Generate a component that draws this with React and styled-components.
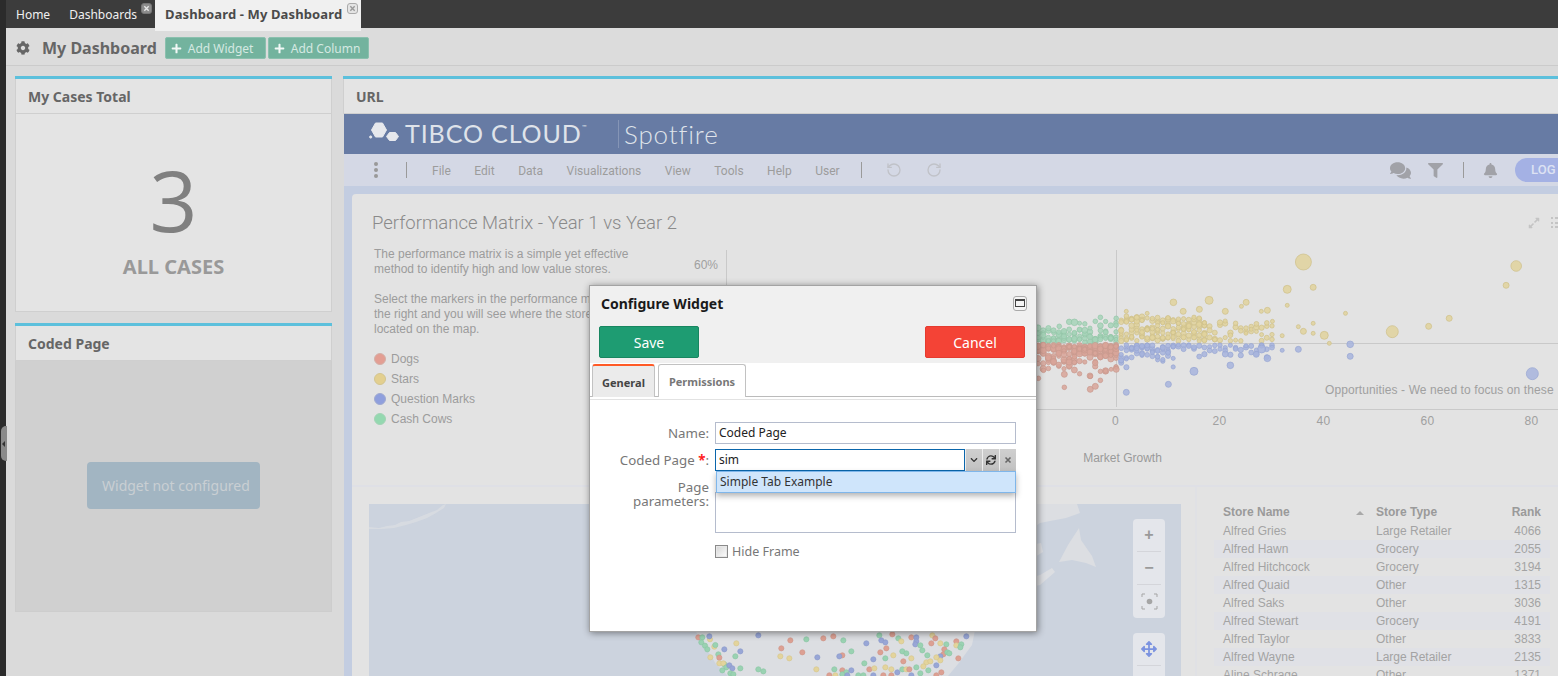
import React from "react";
import styled, { createGlobalStyle } from "styled-components";
import {
  FaCog, FaPlus, FaSync, FaChevronDown, FaArrowsAlt, FaExpandAlt, FaComments, FaFilter, FaBell,
} from "react-icons/fa";
import { RotateCcw, RotateCw } from "lucide-react";

const UI = `"Noto Sans", "DejaVu Sans", sans-serif`;
const ARIAL = `"Liberation Sans", Arial, sans-serif`;
const ROBOTO = `Roboto, "Liberation Sans", sans-serif`;

const Global = createGlobalStyle`
  html, body { margin: 0; padding: 0; background: #2b2b2b; overflow: hidden; }
  * { box-sizing: border-box; }
`;

const Page = styled.div`
  position: relative; width: 1558px; height: 676px; overflow: hidden; display: flex;
  font-family: ${UI}; background: #dadada;
`;
const Rail = styled.div`width: 6px; flex: none; background: #2b2b2b;`;
const Handle = styled.div`
  position: absolute; left: 1px; top: 426px; width: 6px; height: 35px; background: #8a8a8a;
  border-radius: 5px 0 0 5px; display: flex; align-items: center;
  &::before { content: ""; border: 3px solid transparent; border-right-color: #333; border-left: 0; margin-left: 1px; }
`;
const Main = styled.div`flex: 1; min-width: 0; display: flex; flex-direction: column;`;

const TabBar = styled.div`
  height: 28px; flex: none; display: flex; background: #3c3c3c; position: relative; z-index: 2;
`;
const Tab = styled.div`
  position: relative; height: ${p => (p.$active ? 31 : 28)}px; flex: none;
  padding: 0 ${p => p.$right}px 0 ${p => p.$left}px;
  font-size: ${p => (p.$active ? 13 : 12)}px; line-height: 29px; white-space: nowrap;
  letter-spacing: ${p => (p.$active ? ".12px" : "0")};
  background: ${p => (p.$active ? "#f0f0f0" : "transparent")};
  color: ${p => (p.$active ? "#4a4a4a" : "#f0f0f0")};
  font-weight: ${p => (p.$active ? 700 : 400)};
`;
const TabClose = styled.span`
  position: absolute; right: ${p => p.$right}px; top: ${p => p.$top}px;
  width: 11px; height: 11px; border-radius: 3px; display: flex;
  background: ${p => (p.$light ? "#e4e4e4" : "#8c8c8c")};
  border: 1px solid ${p => (p.$light ? "#aaa" : "#777")};
  align-items: center; justify-content: center;
  svg { display: block; }
`;

const Toolbar = styled.div`
  height: 38px; flex: none; display: flex; align-items: center; padding: 3px 0 0 10px;
  background: #dcdcdc; border-bottom: 1px solid #cbcbcb; color: #666;
`;
const ToolTitle = styled.div`
  font-size: 16px; font-weight: 700; color: #666; margin: 0 8px 0 12px; white-space: nowrap;
`;
const ToolButton = styled.div`
  height: 22px; width: 101px; margin-right: 2px; display: flex; align-items: center; padding-left: 5px; gap: 6px;
  background: #73b39e; border: 1px solid #8bc0ae; border-radius: 2px; color: #d5e9e2;
  font-size: 12px; white-space: nowrap;
  svg { color: #f2f8f6; flex: none; }
`;

const Columns = styled.div`flex: 1; min-height: 0; display: flex; gap: 11px; padding: 10px 0 0 9px;`;
const LeftCol = styled.div`width: 317px; flex: none; display: flex; flex-direction: column; gap: 11px;`;
const RightCol = styled.div`flex: 1; min-width: 0; display: flex; flex-direction: column;`;

const Widget = styled.section`
  display: flex; flex-direction: column; border-top: 3px solid #5cc0dc; height: ${p => p.$h ? p.$h + "px" : "auto"};
  flex: ${p => p.$grow ? "1" : "none"}; min-height: 0;
`;
const WidgetHead = styled.header`
  height: 35px; flex: none; padding: 0 12px; display: flex; align-items: center;
  background: #e4e4e4; border: 1px solid #cfcfcf; border-top: 0; border-right-width: ${p => (p.$open ? 0 : 1)}px;
  font-size: 14px; font-weight: 700; color: #666;
`;
const TotalBody = styled.div`
  flex: 1; background: #e4e4e4; border: 1px solid #cfcfcf; border-top: 0;
  display: flex; flex-direction: column; align-items: center; color: #8a8a8a;
`;
const BigNum = styled.div`font-family: "Open Sans", sans-serif; font-size: 84px; line-height: 96px; margin-top: 38px; font-weight: 400; color: #808080;`;
const BigLabel = styled.div`font-size: 20px; font-weight: 700; color: #999; margin-top: 5px; line-height: 28px;`;
const CodedBody = styled.div`
  flex: 1; background: #d0d0d0; border: 1px solid #cdcdcd; border-top: 0; padding-bottom: 2px;
  display: flex; align-items: center; justify-content: center;
`;
const NotConfigured = styled.div`
  width: 173px; height: 47px; border-radius: 4px; background: #a2b5c2; color: #c9cfd3;
  font-size: 14px; display: flex; align-items: center; padding-left: 15px; white-space: nowrap;
`;

const Frame = styled.div`
  flex: 1; min-height: 0; overflow: hidden; background: #c3cde1; display: flex; flex-direction: column;
  margin-left: 1px;
`;
const Banner = styled.div`
  height: 40px; flex: none; background: #677ba4; display: flex; align-items: center; padding-left: 25px; color: #dfe3ea;
`;
const Brand = styled.div`
  font-family: Lato, sans-serif; font-size: 25px; letter-spacing: .9px; font-weight: 400; white-space: nowrap; margin: -3px 0 0 5px; width: 213px;
  sup { font-size: 6px; vertical-align: 14px; letter-spacing: 0; }
`;
const BrandSep = styled.div`width: 1px; height: 28px; background: #8595b6; flex: none;`;
const Spot = styled.div`font-family: Lato, sans-serif; font-size: 26px; font-weight: 300; margin-left: 5px; letter-spacing: .85px;`;

const MenuBar = styled.div`
  height: 32px; flex: none; background: #d4d8e5; display: flex; align-items: center; color: #9c9c9c;
  font-family: ${ROBOTO}; font-size: 12px; overflow: hidden;
`;
const MenuDots = styled.div`
  width: 5px; margin-left: 30px; display: flex; flex-direction: column; gap: 2px;
  i { width: 4px; height: 4px; border-radius: 50%; background: #999; display: block; }
`;
const MenuSep = styled.div`
  width: 1px; height: 16px; background: #9a9a9a; flex: none; margin-left: ${p => p.$left}px; margin-right: ${p => p.$right}px;
`;
const MenuItem = styled.span`margin-right: 23.5px; padding-top: 2px; white-space: nowrap;`;
const GhostIcon = styled.span`display: flex; color: #c0c2c8; margin-right: ${p => p.$right}px;`;
const DarkIcon = styled.span`display: flex; color: #a1a2a8; margin-left: ${p => p.$left || 0}px;`;
const LogIn = styled.div`
  margin-left: 17px; flex: none; width: 80px; height: 24px; border-radius: 12px; background: #a4b1e4;
  color: #dde2f3; font-weight: 500; padding-left: 16px; line-height: 24px; font-size: 13px; white-space: nowrap;
`;

const Card = styled.div`
  flex: 1; min-height: 0; margin: 8px 0 0 8px; background: #e3e3e3; border-radius: 4px 0 0 0;
  display: flex; flex-direction: column; overflow: hidden;
`;
const CardHead = styled.div`
  height: 46px; flex: none; display: flex; align-items: center; justify-content: space-between;
  padding: 12px 0 0 20px; font-family: ${ROBOTO}; font-size: 18.5px; font-weight: 300; color: #8a8a8a;
`;
const CardTools = styled.div`display: flex; gap: 11px; color: #c4c4c4; margin-right: -8px; width: 38px;`;
const ListGlyph = styled.div`
  width: 14px; height: 11px; flex: none; display: flex; flex-direction: column; justify-content: space-between;
  i { display: block; height: 2px; background: repeating-linear-gradient(90deg, #c4c4c4 0 2px, transparent 2px 4px, #c4c4c4 4px 14px); }
`;
const TopRow = styled.div`height: 247px; flex: none; display: flex; border-bottom: 2px solid #dfe0e6;`;
const Describe = styled.div`width: 328px; flex: none; padding: 7px 0 0 22px; font: 12px/15px ${ARIAL}; color: #9c9c9c;`;
const Para = styled.p`margin: 0 0 15px; white-space: nowrap;`;
const LegendList = styled.div`display: flex; flex-direction: column; gap: 6px; margin-top: 0;`;
const LegendRow = styled.div`display: flex; align-items: center; gap: 5px; height: 14px; line-height: 14px;`;
const LegendDot = styled.i`
  width: 12px; height: 12px; border-radius: 50%; display: block; background: ${p => p.$c}; border: 1px solid ${p => p.$b};
`;

const BottomRow = styled.div`flex: 1; min-height: 0; display: flex;`;
const MapPane = styled.div`
  position: relative; width: 845px; flex: none; padding: 17px 16px 0 17px; border-right: 2px solid #e0e1e5; overflow: hidden;
`;
const MapControls = styled.div`
  position: absolute; left: 781px; top: ${p => p.$top}px; width: 32px; background: #e4e6eb; border-radius: 4px; display: flex;
  flex-direction: column; align-items: center; color: #9a9a9a;
`;
const MapBtn = styled.div`
  width: 24px; height: 33px; display: flex; align-items: center; justify-content: center; font-size: 16px; font-family: ${ARIAL}; font-weight: 700;
  border-bottom: ${p => (p.$last ? "none" : "1px solid #d4d5da")};
`;
const TablePane = styled.div`flex: 1; min-width: 0; padding: 16px 8px 0 17px; font: 12px ${ARIAL}; color: #a3a3a3;`;
const Row = styled.div`
  display: grid; grid-template-columns: 153px 120px 1fr; height: 18px; align-items: center; padding: 0 9px 0 9px;
  background: ${p => (p.$odd ? "#e0e1e6" : "transparent")};
  font-weight: ${p => (p.$head ? 700 : 400)};
  color: ${p => (p.$head ? "#9a9a9a" : "#a3a3a3")};
  margin-bottom: ${p => (p.$head ? 1 : 0)}px;
  span:last-child { text-align: right; }
`;
const SortCell = styled.span`
  position: relative;
  &::after { content: ""; position: absolute; right: 12px; top: 6px; border: 4px solid transparent; border-bottom: 4px solid #a9a9a9; border-top: 0; }
`;

const Dialog = styled.div`
  position: absolute; left: 589px; top: 285px; width: 448px; height: 347px; z-index: 5;
  background: #fff; border: 1px solid #a3a3a3; box-shadow: 1px 1px 7px rgba(0,0,0,.45);
  display: flex; flex-direction: column; color: #777;
`;
const DialogHead = styled.div`background: #f0f0f0; padding: 0 11px 0 9px; height: 77px; flex: none;`;
const TitleRow = styled.div`display: flex; align-items: center; justify-content: space-between; height: 34px; padding: 0 0 0 2px; margin-right: -2px;`;
const Title = styled.div`font-size: 14px; font-weight: 700; color: #1a1a1a;`;
const MaxBtn = styled.div`
  width: 14px; height: 15px; border: 1px solid #aaa; border-radius: 3px; display: flex; align-items: center; justify-content: center; background: #f5f5f5;
  i { display: block; width: 10px; height: 8px; border: 1px solid #444; border-top-width: 2px; }
`;
const ButtonRow = styled.div`display: flex; justify-content: space-between; margin-top: 6px;`;
const ActionBtn = styled.div`
  width: 100px; height: 32px; border-radius: 2px; color: #fff; font-size: 14px; display: flex; align-items: center; justify-content: center;
  background: ${p => p.$bg}; border: 1px solid ${p => p.$bd};
`;
const TabRow = styled.div`height: 34px; flex: none; display: flex; gap: 3px; padding: 1px 0 0 2px; border-bottom: 1px solid #bbb;`;
const DlgTab = styled.div`
  height: 33px; width: ${p => p.$w}px; display: flex; align-items: center; justify-content: center; font-size: 11px; font-weight: 700;
  border: 1px solid #c2c2c2; border-bottom: 0; border-radius: 3px 3px 0 0;
  background: ${p => (p.$active ? "#ebebeb" : "#fff")}; color: ${p => (p.$active ? "#444" : "#777")};
  border-top: ${p => (p.$active ? "2px solid #ff5a26" : "1px solid #c2c2c2")};
  padding-top: 1px;
`;
const Panel = styled.div`
  position: relative; flex: 1; margin-top: 2px; border-top: 1px solid #e2e2e2; padding: 22px 0 0;
  display: flex; flex-direction: column; gap: 5px; font-size: 12px;
`;
const FormRow = styled.div`display: flex; align-items: ${p => p.$top ? "flex-start" : "center"};`;
const Label = styled.label`
  width: 119px; flex: none; text-align: right; color: #777; font-size: 13.3px; line-height: 14px; margin-right: 6px;
  margin-top: ${p => p.$mt || 0}px;
  em { color: #f22; font-style: normal; font-weight: 700; }
`;
const TextBox = styled.div`
  width: 301px; height: 22px; border: 1px solid #b5bccd; color: #222; padding: 0 3px; line-height: 20px; background: #fff; white-space: nowrap;
`;
const ComboInput = styled.div`
  width: 250px; height: 22px; border: 1px solid #0a66ac; color: #222; padding: 0 3px; line-height: 20px; background: #fff;
`;
const ComboBtn = styled.div`
  width: 17px; height: 22px; flex: none; background: linear-gradient(#cfcfcf, #c2c2c2); border-left: 1px solid #eee;
  display: flex; align-items: center; justify-content: center; color: #333;
`;
const Suggest = styled.div`
  position: absolute; left: 126px; top: 71px; width: 300px; height: 22px; z-index: 3; padding: 0 3px; line-height: 20px; color: #333;
  background: #cfe5fb; border: 1px solid #7fb6ea; box-shadow: 0 3px 6px rgba(0,0,0,.3);
`;
const AreaBox = styled.div`width: 301px; height: 41px; margin-top: 16px; border: 1px solid #b5bccd; background: #fff;`;
const CheckRow = styled.div`display: flex; align-items: center; gap: 4px; margin: 5px 0 0 125px; font-size: 12.5px; color: #777;`;
const Check = styled.i`
  display: block; width: 13px; height: 13px; border: 1px solid #8a8a8a; background: linear-gradient(135deg, #d4d4d4, #fff);
  box-shadow: inset 0 0 0 1px #e8e8e8;
`;

/* ---------- chart data ---------- */
const rng = (seed) => () => {
  seed |= 0; seed = (seed + 0x6d2b79f5) | 0;
  let t = Math.imul(seed ^ (seed >>> 15), 1 | seed);
  t = (t + Math.imul(t ^ (t >>> 7), 61 | t)) ^ t;
  return ((t ^ (t >>> 14)) >>> 0) / 4294967296;
};
const COL = {
  y: ["#e0d29c", "#cfc08a"], b: ["#a7b4dd", "#98a6d2"], r: ["#d8a599", "#c99a8e"], g: ["#a6d3b8", "#94c6a8"],
};
const Z = (x, y) => [1030 + x / 2.97, 280 + y / 3];
const explicit = [
  ...[[1076,155,18],[764,28,12],[841,22,9],[1414,16,9],[532,61,12],[426,67,10],[874,166,12],[1184,139,9],[1245,115,9],[937,100,6],[812,154,9],[797,140,6],[841,130,6],[889,190,6],[720,124,6],[764,76,6],[642,67,9],[628,79,6],[580,94,9],[455,94,9],[503,88,9],[348,100,6],[286,94,6],[705,91,9],[687,94,6],[749,167,6],[841,160,6],[812,-54,24],[1444,-42,16]].map(d => ["y", ...d]),
  ...[[1492,281,18],[951,193,10],[951,229,9],[797,208,9],[749,211,6],[705,235,10],[595,256,10],[487,274,12],[411,313,9],[286,337,9],[688,207,12],[672,223,9],[580,222,9]].map(d => ["b", ...d]),
  ...[[179,328,9],[194,319,9],[209,301,7],[102,322,7],[179,289,7],[256,268,9],[241,268,6],[40,271,7],[102,283,9],[25,295,7]].map(d => ["r", ...d]),
  ...[[132,127,10],[209,112,7],[194,124,7],[256,115,7],[87,139,7]].map(d => ["g", ...d]),
].map(([c, x, y, r]) => { const [a, b] = Z(x, y); return { c, x: a, y: b, r: r / 3 }; });

const scatter = (() => {
  const rand = rng(41);
  const out = [];
  const X = (k) => 1116 + 5.2 * k;
  for (let k = -16; k <= 0; k++) {
    for (let i = 0; i < 6; i++) out.push({ c: "g", x: X(k), y: 342 - rand() * rand() * 26, r: 2 + rand() });
    for (let i = 0; i < 11; i++) out.push({ c: "r", x: X(k), y: 345 + rand() * rand() * 32, r: 2 + rand() * 1.2 });
  }
  for (let k = 1; k <= 30; k++) {
    const n = k < 18 ? 9 : 3;
    for (let i = 0; i < n; i++) out.push({ c: "y", x: X(k), y: 341 - rand() * (k < 18 ? 25 : 20), r: 2 + rand() * .8 });
    const m = k < 12 ? 6 : 2;
    for (let i = 0; i < m; i++) out.push({ c: "b", x: X(k), y: 345 + rand() * rand() * (k < 12 ? 24 : 16), r: 2 + rand() * .7 });
  }
  return [...out, ...explicit];
})();

const mapRaw = "r55,37 g67,37 y90,43 b88,34 g64,52 g75,62 g82,73 y103,65 g106,60 y169,55 b235,31 r331,46 g379,43 r430,40 r460,34 g490,46 b559,55 g598,31 b604,46 b616,52 r637,28 g655,40 y664,49 r694,37 b709,37 b709,49 b706,58 g721,61 y757,31 r766,40 y781,55 r754,55 g799,58 r829,49 y829,61 g844,58 g841,67 b859,34 g727,76 r793,73 r790,88 g802,82 g808,85 r835,100 b781,94 y769,97 y781,106 y739,112 y751,109 g742,91 r670,109 y694,100 g667,79 g679,85 y640,91 r619,70 r601,82 g616,100 b580,103 r487,91 b478,94 g514,79 b412,97 r367,82 r304,70 y301,94 y328,100 b133,73 b181,79 g166,94 g115,88 r118,98 y91,97 y118,115 g133,118 y130,115 g139,127 g127,136 b148,121 b157,130 g181,130 g235,133 g250,139 g151,145 g160,148 y409,133 g463,133 r487,136 g499,142 b514,136 g487,148 r448,151 y466,151 g553,115 r568,133 y583,130 y616,127 y634,133 b652,142 g667,133 y679,133 r688,133 g709,127 y730,124 g745,136 b769,121 r784,142 r769,151 g721,145 b694,151 r610,151 r634,151 b580,151 g535,151 g550,151 b502,151";
const mapDots = mapRaw.split(" ").map((s) => {
  const [x, y] = s.slice(1).split(",").map(Number);
  return { c: s[0], x: 680 + x / 3, y: 625 + y / 3 };
});
const MAPC = { y: ["#e3d49c", "#d5c58c"], b: ["#98a6d6", "#8a99ca"], r: ["#dca093", "#cf9487"], g: ["#9ad2b2", "#8ac4a3"] };

const Chart = () => (
  <svg width="878" height="240" viewBox="680 240 878 240" style={{ flex: "none", display: "block" }}>
    <g stroke="#c9c9c9" strokeWidth="1">
      <line x1="726.5" y1="250" x2="726.5" y2="408" />
      <line x1="1116.5" y1="250" x2="1116.5" y2="407" />
      <line x1="726" y1="343.5" x2="1558" y2="343.5" />
      <line x1="726" y1="409.5" x2="1558" y2="409.5" />
    </g>
    {scatter.map((d, i) => (
      <circle key={i} cx={d.x} cy={d.y} r={d.r} fill={COL[d.c][0]} stroke={COL[d.c][1]} strokeWidth=".7" fillOpacity=".85" />
    ))}
    <g fontFamily={ARIAL} fontSize="12" fill="#a0a0a0" textAnchor="middle">
      <text x="706" y="269">60%</text>
      {[0, 20, 40, 60, 80].map((v) => <text key={v} x={1115.5 + v * 5.2} y="425" letterSpacing=".4">{v}</text>)}
      <text x="1122.5" y="462" fill="#9a9a9a">Market Growth</text>
    </g>
    <text x="1325" y="394" fontFamily={ARIAL} fontSize="12" fill="#a0a0a0" letterSpacing=".1">Opportunities - We need to focus on these</text>
  </svg>
);

const MapArt = () => (
  <svg width="812" height="172" viewBox="369 504 812 172" style={{ display: "block" }}>
    <rect x="369" y="504" width="812" height="172" fill="#ccd3de" />
    <g fill="#dcdee2">
      <path d="M696 632 L975 630 L972 645 L958 664 L948 676 L728 676 L716 664 L706 648 Z" />
      <path d="M1030 504 L1077 504 L1080 513 L1066 518 L1050 521 L1040 523 L1030 530 Z" />
      <path d="M1059 562 L1068 545 L1079 528 L1081 540 L1092 556 L1096 567 L1086 563 L1072 560 Z" />
      <path d="M1030 560 L1043 552 L1041 543 L1030 545 Z" />
      <path d="M1030 587 L1040 585 L1055 572 L1052 568 L1040 575 L1030 578 Z" />
      <path d="M369 527 l10 1 l8 -2 l8 -1 l6 -3 l8 -1 l10 -4 l10 -4 l8 -3 l6 -5 l3 -1 l-2 4 l-8 5 l-9 5 l-11 4 l-10 3 l-12 3 l-12 1 l-13 0 Z" opacity=".7" />
    </g>
    {mapDots.map((d, i) => (
      <circle key={i} cx={d.x} cy={d.y} r="2.6" fill={MAPC[d.c][0]} stroke={MAPC[d.c][1]} strokeWidth=".6" />
    ))}
  </svg>
);

const STORES = [
  ["Alfred Gries", "Large Retailer", "4066"], ["Alfred Hawn", "Grocery", "2055"], ["Alfred Hitchcock", "Grocery", "3194"],
  ["Alfred Quaid", "Other", "1315"], ["Alfred Saks", "Other", "3036"], ["Alfred Stewart", "Grocery", "4191"],
  ["Alfred Taylor", "Other", "3833"], ["Alfred Wayne", "Large Retailer", "2135"], ["Aline Schrage", "Other", "1371"],
];
const MENU = ["File", "Edit", "Data", "Visualizations", "View", "Tools", "Help", "User"];
const LEGEND = [
  ["Dogs", "#e39e93", "#d3b0a8"], ["Stars", "#e3cf8f", "#d3c590"], ["Question Marks", "#8f9fdd", "#a0aad0"], ["Cash Cows", "#94d8b0", "#a3d3b5"],
];

const X = ({ c = "#e8e8e8", s = 7 }) => (
  <svg width={s} height={s} viewBox="0 0 8 8"><path d="M1.5 1.5 L6.5 6.5 M6.5 1.5 L1.5 6.5" stroke={c} strokeWidth="1.6" /></svg>
);

const HexLogo = () => (
  <svg width="31" height="20" viewBox="0 0 31 20" style={{ flex: "none", marginTop: -4 }}>
    <g fill="#e6e8ed" stroke="#e6e8ed" strokeWidth="1" strokeLinejoin="round">
      <circle cx="1.7" cy="15" r="1.1" />
      <path d="M6.5 1 L13.5 1 L17.5 8 L13.5 15 L6.5 15 L2.5 8 Z" />
      <path d="M20.5 10.5 L26.5 10.5 L29.5 14.5 L26.5 18.5 L20.5 18.5 L17.5 14.5 Z" />
    </g>
  </svg>
);

export default function App() {
  return (
    <Page>
      <Global />
      <Rail />
      <Handle />
      <Main>
        <TabBar>
          <Tab $left={10} $right={19}>Home</Tab>
          <Tab $left={0} $right={18}>Dashboards<TabClose $right={3} $top={3}><X /></TabClose></Tab>
          <Tab $active $left={10} $right={19}>Dashboard - My Dashboard<TabClose $light $right={3} $top={3}><X c="#999" /></TabClose></Tab>
        </TabBar>
        <Toolbar>
          <FaCog size={14} />
          <ToolTitle>My Dashboard</ToolTitle>
          <ToolButton><FaPlus size={11} />Add Widget</ToolButton>
          <ToolButton><FaPlus size={11} />Add Column</ToolButton>
        </Toolbar>
        <Columns>
          <LeftCol>
            <Widget $h={236}>
              <WidgetHead>My Cases Total</WidgetHead>
              <TotalBody>
                <BigNum>3</BigNum>
                <BigLabel>ALL CASES</BigLabel>
              </TotalBody>
            </Widget>
            <Widget $h={289}>
              <WidgetHead>Coded Page</WidgetHead>
              <CodedBody><NotConfigured>Widget not configured</NotConfigured></CodedBody>
            </Widget>
          </LeftCol>
          <RightCol>
            <Widget $grow>
              <WidgetHead $open>URL</WidgetHead>
              <Frame>
                <Banner>
                  <HexLogo />
                  <Brand>TIBCO CLOUD<sup>™</sup></Brand>
                  <BrandSep />
                  <Spot>Spotfire</Spot>
                </Banner>
                <MenuBar>
                  <MenuDots><i /><i /><i /></MenuDots>
                  <MenuSep $left={28} $right={25} />
                  {MENU.map((m) => <MenuItem key={m}>{m}</MenuItem>)}
                  <MenuSep $left={-2} $right={24} />
                  <GhostIcon $right={24}><RotateCcw size={16} /></GhostIcon>
                  <GhostIcon $right={448}><RotateCw size={16} /></GhostIcon>
                  <DarkIcon><FaComments size={21} /></DarkIcon>
                  <DarkIcon $left={17}><FaFilter size={15} /></DarkIcon>
                  <MenuSep $left={20} $right={19} />
                  <DarkIcon><FaBell size={15} /></DarkIcon>
                  <LogIn>LOG IN</LogIn>
                </MenuBar>
                <Card>
                  <CardHead>
                    Performance Matrix - Year 1 vs Year 2
                    <CardTools><FaExpandAlt size={12} /><ListGlyph><i /><i /><i /></ListGlyph></CardTools>
                  </CardHead>
                  <TopRow>
                    <Describe>
                      <Para>The performance matrix is a simple yet effective<br />method to identify high and low value stores.</Para>
                      <Para>Select the markers in the performance matrix on<br />the right and you will see where the stores are<br />located on the map.</Para>
                      <LegendList>
                        {LEGEND.map(([t, c, b]) => (
                          <LegendRow key={t}><LegendDot $c={c} $b={b} />{t}</LegendRow>
                        ))}
                      </LegendList>
                    </Describe>
                    <Chart />
                  </TopRow>
                  <BottomRow>
                    <MapPane>
                      <MapArt />
                      <MapControls $top={32}>
                        <MapBtn>+</MapBtn>
                        <MapBtn>−</MapBtn>
                        <MapBtn $last>
                          <svg width="17" height="17" viewBox="0 0 17 17" fill="none" stroke="#a5a5a5" strokeWidth="1">
                            <path d="M1 4V1h3M13 1h3v3M16 13v3h-3M4 16H1v-3" />
                            <circle cx="8.5" cy="8.5" r="2.8" fill="#a5a5a5" stroke="none" />
                          </svg>
                        </MapBtn>
                      </MapControls>
                      <MapControls $top={146}>
                        <MapBtn><FaArrowsAlt size={16} color="#7c93e0" /></MapBtn>
                        <MapBtn $last />
                      </MapControls>
                    </MapPane>
                    <TablePane>
                      <Row $head><SortCell>Store Name</SortCell><span>Store Type</span><span>Rank</span></Row>
                      {STORES.map((r, i) => (
                        <Row key={r[0]} $odd={i % 2 === 1}><span>{r[0]}</span><span>{r[1]}</span><span>{r[2]}</span></Row>
                      ))}
                    </TablePane>
                  </BottomRow>
                </Card>
              </Frame>
            </Widget>
          </RightCol>
        </Columns>
      </Main>
      <Dialog>
        <DialogHead>
          <TitleRow>
            <Title>Configure Widget</Title>
            <MaxBtn><i /></MaxBtn>
          </TitleRow>
          <ButtonRow>
            <ActionBtn $bg="#1e9c72" $bd="#188660">Save</ActionBtn>
            <ActionBtn $bg="#f44336" $bd="#e53b2f">Cancel</ActionBtn>
          </ButtonRow>
        </DialogHead>
        <TabRow>
          <DlgTab $active $w={63}>General</DlgTab>
          <DlgTab $w={88}>Permissions</DlgTab>
        </TabRow>
        <Panel>
          <FormRow>
            <Label>Name:</Label>
            <TextBox>Coded Page</TextBox>
          </FormRow>
          <FormRow>
            <Label>Coded Page <em>*</em>:</Label>
            <ComboInput>sim</ComboInput>
            <ComboBtn><FaChevronDown size={8} /></ComboBtn>
            <ComboBtn><FaSync size={10} color="#333" /></ComboBtn>
            <ComboBtn><X c="#666" s={8} /></ComboBtn>
          </FormRow>
          <Suggest>Simple Tab Example</Suggest>
          <FormRow $top>
            <Label $mt={4}>Page<br />parameters:</Label>
            <AreaBox />
          </FormRow>
          <CheckRow><Check />Hide Frame</CheckRow>
        </Panel>
      </Dialog>
    </Page>
  );
}
